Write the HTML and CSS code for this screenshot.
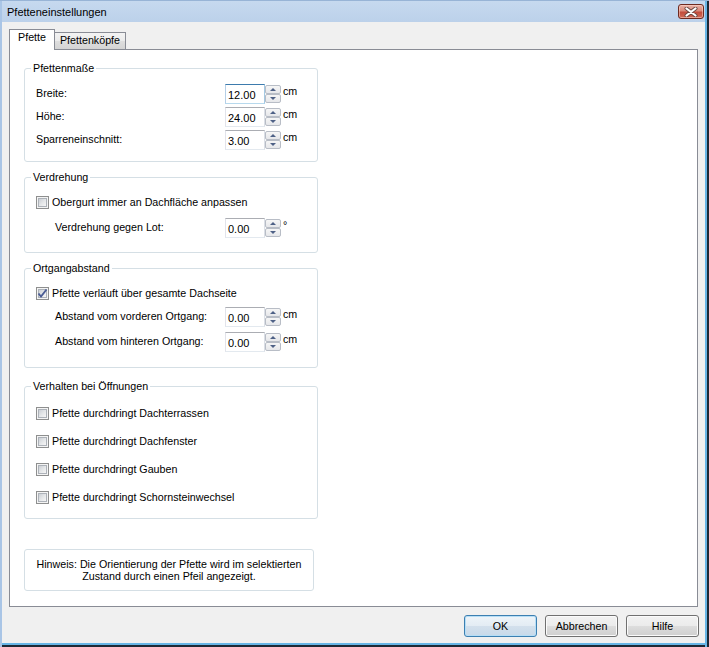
FILE: index.html
```html
<!DOCTYPE html>
<html lang="de">
<head>
<meta charset="utf-8">
<title>Pfetteneinstellungen</title>
<link rel="stylesheet" href="styles.css">
</head>
<body>
<div class="window">
  <div class="titlebar">
    <span class="title">Pfetteneinstellungen</span>
    <div class="close">
      <svg width="14" height="10" viewBox="0 0 14 10"><path d="M2.5 1.5 L11.5 8.5 M11.5 1.5 L2.5 8.5" stroke="#6a4640" stroke-width="4" stroke-linecap="round" fill="none"/><path d="M2.5 1.5 L11.5 8.5 M11.5 1.5 L2.5 8.5" stroke="#ffffff" stroke-width="2.2" stroke-linecap="round" fill="none"/></svg>
    </div>
  </div>
  <div class="frame">
    <div class="client">
      <div class="tabs">
        <div class="tab active">Pfette</div>
        <div class="tab">Pfettenköpfe</div>
      </div>
      <div class="panel">
        <div class="group g1">
          <span class="legend">Pfettenmaße</span>
          <div class="row">
            <span class="label">Breite:</span>
            <div class="spin"><span class="field focus">12.00</span><span class="spinbtn"><span class="up"></span><span class="down"></span></span></div>
            <span class="unit">cm</span>
          </div>
          <div class="row">
            <span class="label">Höhe:</span>
            <div class="spin"><span class="field">24.00</span><span class="spinbtn"><span class="up"></span><span class="down"></span></span></div>
            <span class="unit">cm</span>
          </div>
          <div class="row">
            <span class="label">Sparreneinschnitt:</span>
            <div class="spin"><span class="field">3.00</span><span class="spinbtn"><span class="up"></span><span class="down"></span></span></div>
            <span class="unit">cm</span>
          </div>
        </div>

        <div class="group g2">
          <span class="legend">Verdrehung</span>
          <div class="check"><span class="cb"><span class="cb-in"></span></span><span>Obergurt immer an Dachfläche anpassen</span></div>
          <div class="row">
            <span class="label indent">Verdrehung gegen Lot:</span>
            <div class="spin"><span class="field">0.00</span><span class="spinbtn"><span class="up"></span><span class="down"></span></span></div>
            <span class="unit">°</span>
          </div>
        </div>

        <div class="group g3">
          <span class="legend">Ortgangabstand</span>
          <div class="check"><span class="cb"><span class="cb-in"><svg width="11" height="11" viewBox="0 0 11 11"><path d="M1.5 5.5 L4 8.5 L9.5 1.5" fill="none" stroke="#4a5c94" stroke-width="1.9"/></svg></span></span><span>Pfette verläuft über gesamte Dachseite</span></div>
          <div class="row">
            <span class="label indent">Abstand vom vorderen Ortgang:</span>
            <div class="spin"><span class="field">0.00</span><span class="spinbtn"><span class="up"></span><span class="down"></span></span></div>
            <span class="unit">cm</span>
          </div>
          <div class="row">
            <span class="label indent">Abstand vom hinteren Ortgang:</span>
            <div class="spin"><span class="field">0.00</span><span class="spinbtn"><span class="up"></span><span class="down"></span></span></div>
            <span class="unit">cm</span>
          </div>
        </div>

        <div class="group g4">
          <span class="legend">Verhalten bei Öffnungen</span>
          <div class="check"><span class="cb"><span class="cb-in"></span></span><span>Pfette durchdringt Dachterrassen</span></div>
          <div class="check"><span class="cb"><span class="cb-in"></span></span><span>Pfette durchdringt Dachfenster</span></div>
          <div class="check"><span class="cb"><span class="cb-in"></span></span><span>Pfette durchdringt Gauben</span></div>
          <div class="check"><span class="cb"><span class="cb-in"></span></span><span>Pfette durchdringt Schornsteinwechsel</span></div>
        </div>

        <div class="hint">Hinweis: Die Orientierung der Pfette wird im selektierten<br>Zustand durch einen Pfeil angezeigt.</div>
      </div>
      <div class="buttons">
        <div class="btn default">OK</div>
        <div class="btn">Abbrechen</div>
        <div class="btn">Hilfe</div>
      </div>
    </div>
  </div>
</div>
</body>
</html>
```
FILE: styles.css
```css
* { box-sizing: border-box; }
html, body { margin: 0; padding: 0; }
body {
  width: 709px;
  height: 647px;
  overflow: hidden;
  background: #f0f0f0;
  font-family: "Liberation Sans", Arial, sans-serif;
  font-size: 10.7px;
  color: #000;
}
.window {
  width: 709px;
  height: 647px;
  display: flex;
  flex-direction: column;
}
.titlebar {
  height: 22px;
  flex: none;
  display: flex;
  align-items: center;
  padding-left: 7px;
  background: linear-gradient(#c6d9ef, #bcd1ea);
  border-top: 1px solid #98b4d6;
  box-shadow: inset 2px 0 0 #a9c5e6, inset -2px 0 0 #1d2936, inset -4px 0 0 #67b5e6;
}
.title { font-size: 11px; padding-top: 1px; }
.close {
  margin-left: auto;
  margin-right: 5px;
  width: 26px;
  height: 15px;
  border: 1px solid #6e2a20;
  border-radius: 3px;
  background: linear-gradient(#e9b1a6 0%, #d98a7b 45%, #c24c3c 55%, #d06a56 100%);
  box-shadow: inset 0 0 0 1px rgba(255, 220, 210, 0.5);
  display: flex;
  align-items: center;
  justify-content: center;
}
.frame {
  flex: 1;
  display: flex;
  padding: 0 4px 4px 2px;
  box-shadow: inset 2px 0 0 #a9c5e6, inset -2px 0 0 #1d2936, inset -4px 0 0 #67b5e6, inset 0 -2px 0 #1d2936, inset 0 -4px 0 #67b5e6;
}
.client {
  flex: 1;
  display: flex;
  flex-direction: column;
  background: #f0f0f0;
  padding: 7px 7px 6px 7px;
}
.tabs {
  display: flex;
  align-items: flex-end;
  height: 20px;
  flex: none;
  position: relative;
  z-index: 1;
}
.tab {
  height: 17px;
  width: 72px;
  margin-left: -1px;
  border: 1px solid #898c95;
  border-bottom: none;
  background: linear-gradient(#f3f3f3, #ebebeb 50%, #dedede 51%, #d4d4d4);
  padding-top: 1px;
  line-height: 13px;
  text-align: center;
}
.tab.active {
  width: 46px;
  height: 21px;
  margin-left: 0;
  margin-bottom: -1px;
  background: #fff;
  padding-top: 1px;
}
.panel {
  flex: none;
  height: 558px;
  border: 1px solid #898c95;
  background: #fff;
  padding: 18px 0 0 14px;
  display: flex;
  flex-direction: column;
}
.group {
  position: relative;
  width: 294px;
  border: 1px solid #d5dfe5;
  border-radius: 3px;
  padding-left: 11px;
}
.legend {
  position: absolute;
  top: -7px;
  left: 6px;
  padding: 0 2px;
  background: #fff;
  line-height: 13px;
}
.g1 { padding-top: 15px; padding-bottom: 11px; }
.g2 { margin-top: 15px; padding-top: 18px; padding-bottom: 14px; }
.g3 { margin-top: 15px; padding-top: 18px; padding-bottom: 15px; }
.g4 { margin-top: 18px; padding-top: 20px; padding-bottom: 14px; }
.row {
  display: flex;
  align-items: center;
  height: 20px;
}
.g1 .row + .row { margin-top: 3px; }
.g2 .row { margin-top: 9px; }
.g3 .row { margin-top: 7px; }
.g3 .row + .row { margin-top: 5px; }
.label {
  width: 189px;
  line-height: 13px;
  margin-top: -1px;
}
.label.indent {
  width: 170px;
  margin-left: 19px;
}
.spin {
  display: flex;
  width: 56px;
  height: 20px;
}
.field {
  width: 40px;
  height: 20px;
  border: 1px solid;
  border-color: #abadb3 #dbdfe6 #e3e9ef #e2e3ea;
  padding: 2px 0 0 2px;
  line-height: 16px;
  font-size: 11px;
  background: #fff;
}
.field.focus {
  border-color: #3d7bad #a4c9e3 #b7d9ed #b5cfe7;
}
.spinbtn {
  width: 16px;
  height: 20px;
  display: flex;
  flex-direction: column;
  padding: 1px 0;
}
.spinbtn span {
  flex: 1;
  border: 1px solid #b8bdc6;
  border-radius: 2px;
  background: linear-gradient(#f6f6f6, #e6e7ea);
  display: flex;
  align-items: center;
  justify-content: center;
}
.spinbtn .up::after {
  content: "";
  border-left: 3px solid transparent;
  border-right: 3px solid transparent;
  border-bottom: 3px solid #4e6186;
}
.spinbtn .down::after {
  content: "";
  border-left: 3px solid transparent;
  border-right: 3px solid transparent;
  border-top: 3px solid #4e6186;
}
.unit {
  align-self: flex-start;
  margin-left: 2px;
  margin-top: 1px;
  line-height: 13px;
}
.check {
  display: flex;
  align-items: center;
  height: 13px;
  line-height: 13px;
}
.g4 .check + .check { margin-top: 15px; }
.cb {
  width: 13px;
  height: 13px;
  flex: none;
  margin-right: 3px;
  border: 1px solid #8e8f8f;
  background: #f4f4f4;
  padding: 1px;
}
.cb-in {
  display: flex;
  width: 9px;
  height: 9px;
  border: 1px solid #adb2b9;
  background: linear-gradient(135deg, #cbcfd5 0%, #e4e6e8 50%, #f6f6f6 100%);
  overflow: visible;
  position: relative;
}
.cb-in svg {
  position: absolute;
  left: -2px;
  top: -2px;
}
.hint {
  margin-top: 30px;
  width: 290px;
  height: 42px;
  border: 1px solid #d5dfe5;
  border-radius: 3px;
  padding-top: 8px;
  text-align: center;
  line-height: 12px;
}
.buttons {
  display: flex;
  justify-content: flex-end;
  gap: 8px;
  margin-top: 8px;
  margin-right: -1px;
  height: 22px;
  flex: none;
}
.btn {
  width: 73px;
  height: 22px;
  border: 1px solid #707070;
  border-radius: 3px;
  background: linear-gradient(#f2f2f2 0%, #ebebeb 50%, #dddddd 51%, #cfcfcf 100%);
  box-shadow: inset 0 0 0 1px #fbfbfb;
  display: flex;
  align-items: center;
  justify-content: center;
  line-height: 13px;
}
.btn.default {
  border-color: #3c7fb1;
  background: linear-gradient(#eef4f9 0%, #e3ecf4 50%, #d3e0ec 51%, #c8d9e9 100%);
  box-shadow: inset 0 0 0 1px #b6def6;
}
```
